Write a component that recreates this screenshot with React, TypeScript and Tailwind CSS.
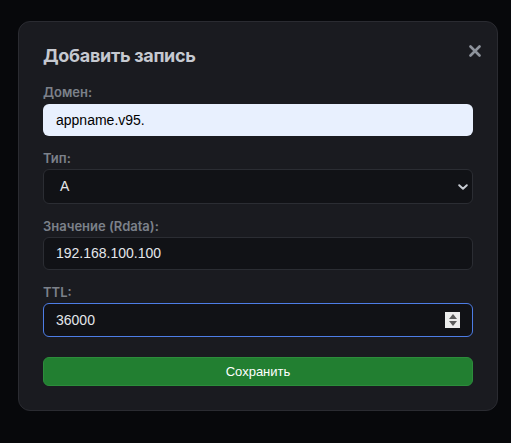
import React from "react";

const labelCls =
  "block text-[13px] leading-[16px] font-semibold text-[#7c818a] mb-[3px]";
const fieldCls =
  "flex items-center w-full rounded-[6px] border border-[#2b2d33] bg-[#111216] text-[14px] text-[#e4e6ea]";
const sans = { fontFamily: "Inter, 'Noto Sans', sans-serif" };
const arial = { fontFamily: "'Liberation Sans', Arial, sans-serif" };

function CloseIcon() {
  return (
    <svg width="12" height="12" viewBox="0 0 12 12" fill="none">
      <path
        d="M1.5 1.5 L10.5 10.5 M10.5 1.5 L1.5 10.5"
        stroke="#8e939c"
        strokeWidth="2.6"
        strokeLinecap="round"
      />
    </svg>
  );
}

function Chevron() {
  return (
    <svg width="10" height="6" viewBox="0 0 10 6" fill="none">
      <path
        d="M1.2 1.2 L5 4.8 L8.8 1.2"
        stroke="#c9cdd4"
        strokeWidth="1.9"
        strokeLinecap="round"
        strokeLinejoin="round"
      />
    </svg>
  );
}

function Spinner() {
  return (
    <div className="flex h-[16px] w-[15px] flex-col items-center justify-center gap-[2px] bg-[#ececec]">
      <svg width="8" height="5" viewBox="0 0 8 5">
        <path d="M4 0 L8 5 L0 5 Z" fill="#5b5b5b" />
      </svg>
      <svg width="8" height="5" viewBox="0 0 8 5">
        <path d="M0 0 L8 0 L4 5 Z" fill="#5b5b5b" />
      </svg>
    </div>
  );
}

export default function App() {
  return (
    <div className="min-h-[443px] w-full bg-[#07080b] pl-[18px] pt-[21px]" style={sans}>
      <div className="w-[480px] rounded-[12px] border border-[#2a2b31] bg-[#1a1b20] px-[24px] pb-[24px] pt-[20px]">
        <div className="flex items-start justify-between">
          <h2 className="text-[18px] leading-[28px] font-bold tracking-[-0.3px] text-[#c6c9d0]">
            Добавить запись
          </h2>
          <button className="mr-[-8px] mt-[3px] flex h-[12px] w-[12px] items-center justify-center">
            <CloseIcon />
          </button>
        </div>

        <div className="mt-[14px]">
          <label className={labelCls}>Домен:</label>
          <div
            className="mt-[4px] flex h-[32px] w-full items-center rounded-[6px] bg-[#e8f0fe] pl-[13px] text-[14px] text-black"
            style={arial}
          >
            appname.v95.
          </div>
        </div>

        <div className="mt-[14px]">
          <label className={labelCls}>Тип:</label>
          <div className={`${fieldCls} h-[35px] justify-between pl-[16px] pr-[4px]`} style={arial}>
            <span>A</span>
            <Chevron />
          </div>
        </div>

        <div className="mt-[14px]">
          <label className={labelCls}>Значение (Rdata):</label>
          <div className={`${fieldCls} h-[33px] pl-[12px]`} style={arial}>
            192.168.100.100
          </div>
        </div>

        <div className="mt-[14px]">
          <label className={labelCls}>TTL:</label>
          <div
            className="flex h-[34px] w-full items-center justify-between rounded-[6px] border border-[#4d7de6] bg-[#111216] pl-[12px] pr-[12px] text-[14px] text-[#e4e6ea]"
            style={arial}
          >
            <span>36000</span>
            <Spinner />
          </div>
        </div>

        <button
          className="mt-[20px] flex h-[29px] w-full items-center justify-center rounded-[6px] border border-[#2c8d3b] bg-[#227f31] text-[13px] text-white"
          style={arial}
        >
          Сохранить
        </button>
      </div>
    </div>
  );
}
